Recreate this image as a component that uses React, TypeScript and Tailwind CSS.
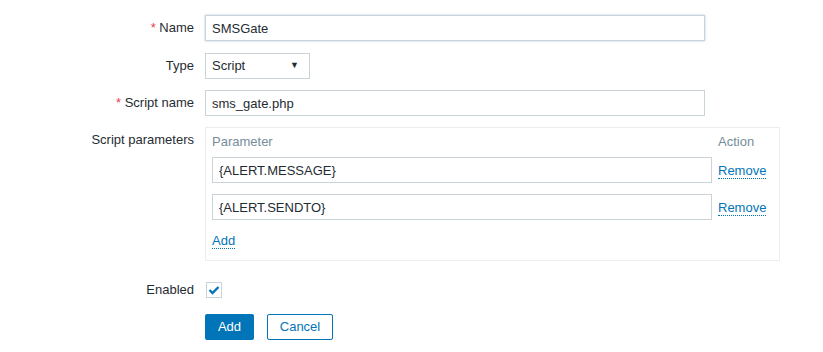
import React from 'react';

const labelCls = 'w-[205px] shrink-0 text-right pr-[11px] text-[13px] text-[#1f2c33]';
const inputCls =
  'h-[26px] border border-[#c9d3d8] bg-white px-[6px] text-[13px] text-[#1f2c33] outline-none';

function Req({ children }: { children: React.ReactNode }) {
  return (
    <span>
      <span className="text-[#e54251]">*</span> {children}
    </span>
  );
}

function LinkText({ children }: { children: React.ReactNode }) {
  return (
    <span className="text-[13px] text-[#0275b8] border-b border-dotted border-[#0275b8] leading-[15px] cursor-pointer">
      {children}
    </span>
  );
}

const App: React.FC = () => {
  const params = ['{ALERT.MESSAGE}', '{ALERT.SENDTO}'];

  return (
    <div className="w-[823px] h-[352px] bg-white pt-[15px] font-['Liberation_Sans',Arial,sans-serif]">
      {/* Name */}
      <div className="flex items-center">
        <div className={labelCls}>
          <Req>Name</Req>
        </div>
        <input
          className={`${inputCls} w-[500px] border-[#7aa7cc] shadow-[0_0_2px_rgba(113,161,198,0.6)]`}
          defaultValue="SMSGate"
        />
      </div>

      {/* Type */}
      <div className="flex items-center mt-[12px]">
        <div className={labelCls}>Type</div>
        <div className="h-[26px] w-[105px] border border-[#c9d3d8] flex items-center justify-between pl-[6px] pr-[10px] text-[13px] text-[#1f2c33]">
          <span>Script</span>
          <span className="text-[9px] text-[#1f2c33]">▼</span>
        </div>
      </div>

      {/* Script name */}
      <div className="flex items-center mt-[11px]">
        <div className={labelCls}>
          <Req>Script name</Req>
        </div>
        <input className={`${inputCls} w-[500px]`} defaultValue="sms_gate.php" />
      </div>

      {/* Script parameters */}
      <div className="flex items-start mt-[11px]">
        <div className={`${labelCls} pt-[3px]`}>Script parameters</div>
        <div className="w-[575px] h-[134px] border border-[#ebeef0] px-[6px] pt-[4px]">
          <div className="flex text-[13px] text-[#768d99] h-[20px] items-center">
            <div className="w-[500px]">Parameter</div>
            <div className="pl-[6px]">Action</div>
          </div>
          {params.map((p, i) => (
            <div key={p} className={`flex items-center ${i === 0 ? 'mt-[5px]' : 'mt-[11px]'}`}>
              <input className={`${inputCls} w-[500px]`} defaultValue={p} />
              <div className="pl-[6px]">
                <LinkText>Remove</LinkText>
              </div>
            </div>
          ))}
          <div className="mt-[13px] flex">
            <LinkText>Add</LinkText>
          </div>
        </div>
      </div>

      {/* Enabled */}
      <div className="flex items-center mt-[19px]">
        <div className={labelCls}>Enabled</div>
        <div className="ml-[1px] w-[16px] h-[16px] border border-[#c9d3d8] bg-white flex items-center justify-center">
          <svg width="12" height="10" viewBox="0 0 12 10">
            <path d="M1.5 5 L4.5 8 L10.5 2" fill="none" stroke="#0275b8" strokeWidth="2.4" />
          </svg>
        </div>
      </div>

      {/* Buttons */}
      <div className="flex items-center mt-[14px] pl-[205px] gap-[13px]">
        <button className="h-[26px] w-[49px] rounded-[2px] bg-[#0275b8] text-white text-[13px]">
          Add
        </button>
        <button className="h-[26px] w-[66px] rounded-[2px] border border-[#0275b8] bg-white text-[#0275b8] text-[13px]">
          Cancel
        </button>
      </div>
    </div>
  );
};

export default App;
